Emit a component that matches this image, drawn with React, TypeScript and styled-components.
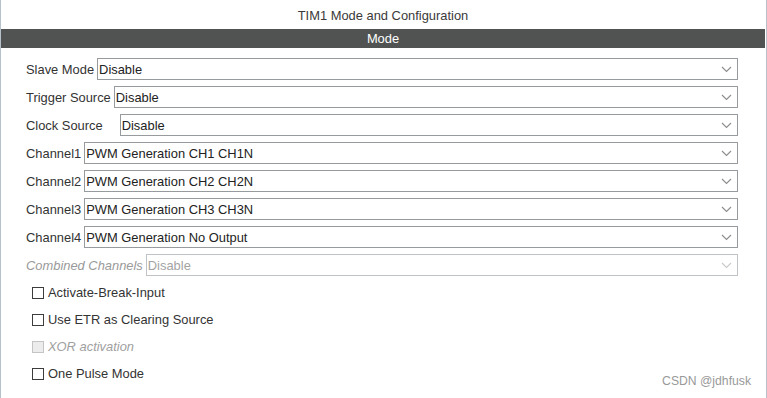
import React from "react";
import styled, { createGlobalStyle } from "styled-components";

const GlobalStyle = createGlobalStyle`
  html, body { margin: 0; padding: 0; background: #ffffff; }
  body { font-family: "Liberation Sans", Arial, sans-serif; }
`;

const Panel = styled.div`
  position: relative;
  box-sizing: border-box;
  width: 767px;
  height: 398px;
  border-left: 1px solid #b7c1cc;
  border-right: 1px solid #b7c1cc;
  padding-right: 1px;
  display: flex;
  flex-direction: column;
  font-family: "Liberation Sans", Arial, sans-serif;
  font-size: 12.9px;
  color: #333333;
  overflow: hidden;
`;

const Title = styled.div`
  height: 29px;
  display: flex;
  align-items: center;
  justify-content: center;
  color: #3a3a3a;
  padding-top: 1px;
  box-sizing: border-box;
`;

const SectionBar = styled.div`
  height: 19px;
  background: #505352;
  color: #ffffff;
  display: flex;
  align-items: center;
  justify-content: center;
`;

const Form = styled.div`
  display: flex;
  flex-direction: column;
  gap: 6px;
  padding: 10px 27px 0 25px;
`;

const Row = styled.div<{ $gap: number }>`
  display: flex;
  align-items: center;
  gap: ${(p) => p.$gap}px;
  height: 22px;
`;

const Label = styled.span<{ $disabled?: boolean }>`
  white-space: nowrap;
  color: ${(p) => (p.$disabled ? "#9a9a9a" : "#333333")};
  font-style: ${(p) => (p.$disabled ? "italic" : "normal")};
`;

const SelectBox = styled.div<{ $disabled?: boolean }>`
  flex: 1;
  box-sizing: border-box;
  height: 22px;
  border: 1px solid ${(p) => (p.$disabled ? "#bfc3c6" : "#979b9e")};
  background: #ffffff;
  display: flex;
  align-items: center;
  justify-content: space-between;
  padding: 0 5px 0 1px;
  color: ${(p) => (p.$disabled ? "#a4a4a4" : "#222222")};
`;

const Chevron = ({ disabled }: { disabled?: boolean }) => (
  <svg width="11" height="7" viewBox="0 0 11 7">
    <path
      d="M1 1 L5.5 5.5 L10 1"
      fill="none"
      stroke={disabled ? "#c9c9c9" : "#8c8c8c"}
      strokeWidth="1.1"
    />
  </svg>
);

const Checks = styled.div`
  display: flex;
  flex-direction: column;
  padding: 3px 0 0 31px;
`;

const CheckRow = styled.div<{ $disabled?: boolean }>`
  height: 27px;
  display: flex;
  align-items: center;
  gap: 4px;
  color: ${(p) => (p.$disabled ? "#a0a0a0" : "#333333")};
  font-style: ${(p) => (p.$disabled ? "italic" : "normal")};
`;

const Box = styled.span<{ $disabled?: boolean }>`
  box-sizing: border-box;
  width: 12px;
  height: 12px;
  border: 1px solid ${(p) => (p.$disabled ? "#c4c4c4" : "#3c3c3c")};
  background: ${(p) => (p.$disabled ? "#ececec" : "#ffffff")};
`;

const Watermark = styled.div`
  position: absolute;
  right: 15px;
  bottom: 10px;
  font-size: 12.2px;
  color: #999999;
`;

type Field = { label: string; value: string; gap?: number; disabled?: boolean };

const fields: Field[] = [
  { label: "Slave Mode", value: "Disable" },
  { label: "Trigger Source", value: "Disable" },
  { label: "Clock Source", value: "Disable", gap: 17 },
  { label: "Channel1", value: "PWM Generation CH1 CH1N" },
  { label: "Channel2", value: "PWM Generation CH2 CH2N" },
  { label: "Channel3", value: "PWM Generation CH3 CH3N" },
  { label: "Channel4", value: "PWM Generation No Output" },
  { label: "Combined Channels", value: "Disable", disabled: true },
];

const checks = [
  { label: "Activate-Break-Input" },
  { label: "Use ETR as Clearing Source" },
  { label: "XOR activation", disabled: true },
  { label: "One Pulse Mode" },
];

export default function App() {
  return (
    <>
      <GlobalStyle />
      <Panel>
        <Title>TIM1 Mode and Configuration</Title>
        <SectionBar>Mode</SectionBar>
        <Form>
          {fields.map((f) => (
            <Row key={f.label} $gap={f.gap ?? 3}>
              <Label $disabled={f.disabled}>{f.label}</Label>
              <SelectBox $disabled={f.disabled}>
                <span>{f.value}</span>
                <Chevron disabled={f.disabled} />
              </SelectBox>
            </Row>
          ))}
        </Form>
        <Checks>
          {checks.map((c) => (
            <CheckRow key={c.label} $disabled={c.disabled}>
              <Box $disabled={c.disabled} />
              <span>{c.label}</span>
            </CheckRow>
          ))}
        </Checks>
        <Watermark>CSDN @jdhfusk</Watermark>
      </Panel>
    </>
  );
}
